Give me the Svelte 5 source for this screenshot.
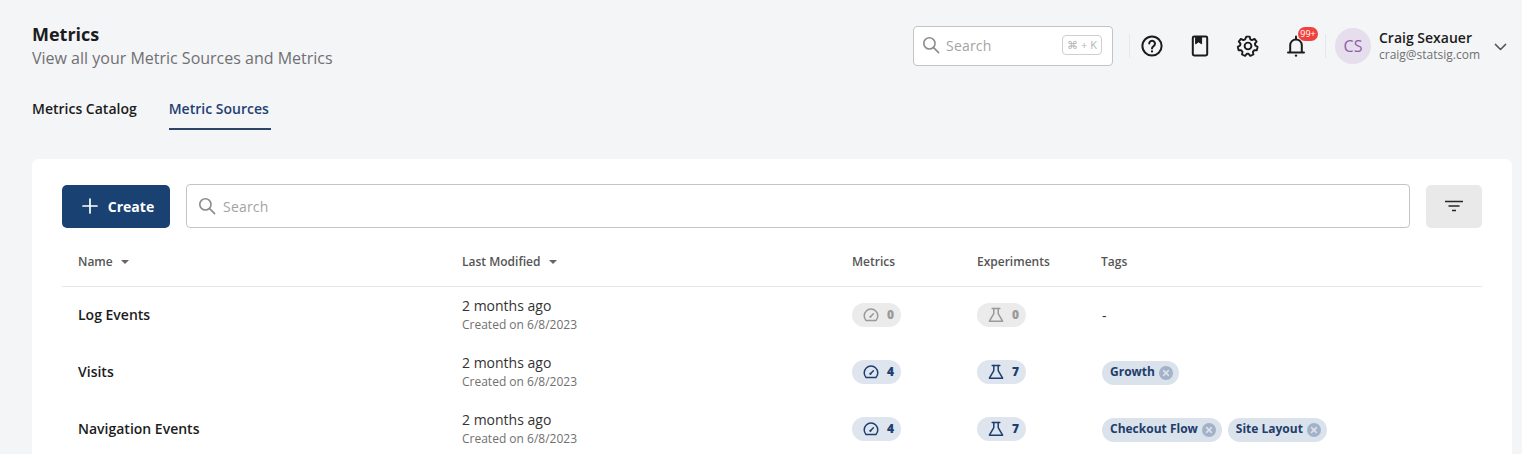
<script>
	const rows = [
		{ name: 'Log Events', metrics: 0, experiments: 0, tags: [] },
		{ name: 'Visits', metrics: 4, experiments: 7, tags: ['Growth'] },
		{ name: 'Navigation Events', metrics: 4, experiments: 7, tags: ['Checkout Flow', 'Site Layout'] }
	];
</script>

{#snippet gauge()}
	<svg class="pill-icon" viewBox="0 0 16 16" fill="none" stroke="currentColor" stroke-width="1.5" stroke-linecap="round" stroke-linejoin="round">
		<path d="M3 13.4h10a6.8 6.8 0 1 0-10 0z" />
		<path d="M7.4 9.8l3-3" />
		<circle cx="7.4" cy="9.8" r="1.1" fill="currentColor" stroke="none" />
	</svg>
{/snippet}

{#snippet flask()}
	<svg class="pill-icon" viewBox="0 0 16 16" fill="none" stroke="currentColor" stroke-width="1.5" stroke-linecap="round" stroke-linejoin="round">
		<path d="M4.2 1.6h7.6" />
		<path d="M5.8 1.6v5L1.4 14.2h13.2L10.2 6.6v-5" />
	</svg>
{/snippet}

{#snippet magnifier()}
	<svg class="search-icon" viewBox="0 0 18 18" fill="none" stroke="currentColor" stroke-width="1.6" stroke-linecap="round">
		<circle cx="7.4" cy="7.4" r="5.6" />
		<path d="M11.6 11.6l5 5" />
	</svg>
{/snippet}

<div class="page">
	<header class="top">
		<div class="titles">
			<h1>Metrics</h1>
			<p>View all your Metric Sources and Metrics</p>
		</div>
		<div class="actions">
			<div class="global-search">
				{@render magnifier()}
				<span class="placeholder">Search</span>
				<span class="kbd">⌘ + K</span>
			</div>
			<span class="divider first"></span>
			<div class="icons">
				<button class="icon-btn" aria-label="Help">
					<svg viewBox="0 0 24 24" fill="none" stroke="currentColor" stroke-width="2" stroke-linecap="round">
						<circle cx="12" cy="12" r="9.6" />
						<path d="M9.2 9.6a2.9 2.9 0 1 1 4.4 2.5c-1 .6-1.6 1.2-1.6 2.3" />
						<circle cx="12" cy="17.4" r="1.1" fill="currentColor" stroke="none" />
					</svg>
				</button>
				<button class="icon-btn" aria-label="Docs">
					<svg viewBox="0 0 24 24" fill="none" stroke="currentColor" stroke-width="2" stroke-linejoin="round">
						<rect x="4.8" y="2.6" width="14.4" height="18.8" rx="1.4" />
						<path d="M7.6 2.6v7.2l3-1.9 3 1.9V2.6z" fill="currentColor" stroke-width="1" />
					</svg>
				</button>
				<button class="icon-btn" aria-label="Settings">
					<svg viewBox="0 0 24 24" fill="none" stroke="currentColor" stroke-width="1.9" stroke-linejoin="round">
						<path d="M10.3 2.6h3.4l.6 2.7 1.7.8 2.5-1.2 2.1 2.7-1.7 2.1.4 1.8 2.3 1.4-.8 3.3-2.7.1-1.2 1.5.5 2.7-3.1 1.4-1.7-2.1h-1.8l-1.7 2.1-3.1-1.4.5-2.7-1.2-1.5-2.7-.1-.8-3.3 2.3-1.4.4-1.8-1.7-2.1 2.1-2.7 2.5 1.2 1.7-.8z" />
						<circle cx="12" cy="12" r="3.4" />
					</svg>
				</button>
				<button class="icon-btn bell" aria-label="Notifications">
					<svg viewBox="0 0 24 24" fill="none" stroke="currentColor" stroke-width="2" stroke-linecap="round" stroke-linejoin="round">
						<path d="M4 18.4h16M6.2 18.4v-7.2a5.8 5.8 0 0 1 11.6 0v7.2" />
						<path d="M12 2.6v2.4" />
						<circle cx="12" cy="21.6" r="1.2" fill="currentColor" stroke="none" />
					</svg>
					<span class="badge">99+</span>
				</button>
			</div>
			<span class="divider second"></span>
			<div class="user">
				<span class="avatar">CS</span>
				<div class="who">
					<span class="user-name">Craig Sexauer</span>
					<span class="user-mail">craig@statsig.com</span>
				</div>
				<svg class="chev" viewBox="0 0 14 8" fill="none" stroke="currentColor" stroke-width="1.6" stroke-linecap="round" stroke-linejoin="round">
					<path d="M1.5 1.2L7 6.6l5.5-5.4" />
				</svg>
			</div>
		</div>
	</header>

	<nav class="tabs">
		<span class="tab">Metrics Catalog</span>
		<span class="tab active">Metric Sources</span>
	</nav>

	<section class="card">
		<div class="toolbar">
			<button class="create">
				<svg viewBox="0 0 16 16" fill="none" stroke="currentColor" stroke-width="1.7" stroke-linecap="round">
					<path d="M8 1v14M1 8h14" />
				</svg>
				Create
			</button>
			<div class="search">
				{@render magnifier()}
				<span class="placeholder">Search</span>
			</div>
			<button class="filter" aria-label="Filter">
				<svg viewBox="0 0 18 12" fill="none" stroke="currentColor" stroke-width="1.7">
					<path d="M0 1.5h18M3.5 6h11M7 10.5h4" />
				</svg>
			</button>
		</div>

		<div class="row head">
			<span>Name <i class="caret"></i></span>
			<span>Last Modified <i class="caret"></i></span>
			<span>Metrics</span>
			<span>Experiments</span>
			<span>Tags</span>
		</div>

		{#each rows as row}
			<div class="row body">
				<span class="name">{row.name}</span>
				<div class="modified">
					<span class="ago">2 months ago</span>
					<span class="created">Created on 6/8/2023</span>
				</div>
				<div>
					<span class="pill" class:empty={row.metrics === 0}>{@render gauge()}<b>{row.metrics}</b></span>
				</div>
				<div>
					<span class="pill" class:empty={row.experiments === 0}>{@render flask()}<b>{row.experiments}</b></span>
				</div>
				<div class="tags">
					{#each row.tags as tag}
						<span class="tag">
							<span class="tag-label">{tag}</span>
							<svg class="tag-x" viewBox="0 0 14 14">
								<circle cx="7" cy="7" r="7" fill="#a3b2c8" />
								<path d="M4.6 4.6l4.8 4.8M9.4 4.6l-4.8 4.8" stroke="#dbe2eb" stroke-width="1.5" stroke-linecap="round" />
							</svg>
						</span>
					{:else}
						<span class="dash">-</span>
					{/each}
				</div>
			</div>
		{/each}
	</section>
</div>

<style>
	:global(body) {
		margin: 0;
		background: #f4f5f7;
		overflow: hidden;
	}

	.page {
		height: 454px;
		overflow: hidden;
		font-family: 'Open Sans', 'Noto Sans', sans-serif;
		color: #1c1c1c;
		padding: 0 10px 0 32px;
		box-sizing: border-box;
	}

	button {
		font: inherit;
		border: none;
		cursor: pointer;
		padding: 0;
	}

	.top {
		display: flex;
		justify-content: space-between;
		align-items: flex-start;
		height: 100px;
	}

	.titles {
		padding-top: 23px;
	}

	h1 {
		margin: 0;
		font-size: 18px;
		line-height: 23px;
		font-weight: 700;
	}

	.titles p {
		margin: 0;
		font-size: 16px;
		line-height: 24px;
		color: #6f7072;
	}

	.actions {
		display: flex;
		align-items: center;
		padding-top: 26px;
		padding-right: 5px;
	}

	.global-search {
		width: 200px;
		height: 40px;
		box-sizing: border-box;
		border: 1px solid #c4c4c4;
		border-radius: 4px;
		background: #fff;
		display: flex;
		align-items: center;
		padding: 0 10px 2px 8px;
	}

	.search-icon {
		width: 18px;
		height: 18px;
		color: #8c8c8c;
		flex: none;
	}

	.placeholder {
		font-size: 14px;
		color: #a3a3a3;
		margin-left: 6px;
		letter-spacing: 0.2px;
	}

	.kbd {
		margin-left: auto;
		font-size: 11px;
		line-height: 18px;
		color: #b3b3b3;
		border: 1px solid #cfcfcf;
		border-radius: 4px;
		padding: 0 4px;
		white-space: nowrap;
	}

	.divider {
		width: 1px;
		height: 24px;
		background: #e6e7e9;
	}

	.divider.first {
		margin: 0 10px 0 16px;
	}

	.divider.second {
		margin: 0 9px 0 17px;
	}

	.icons {
		display: flex;
		gap: 24px;
	}

	.icon-btn {
		position: relative;
		width: 24px;
		height: 24px;
		background: none;
		color: #1c1c1c;
		display: block;
	}

	.icon-btn svg {
		display: block;
		width: 24px;
		height: 24px;
	}

	.badge {
		position: absolute;
		top: -7px;
		left: 14px;
		min-width: 20px;
		height: 14px;
		border-radius: 7px;
		background: #f0413d;
		color: #fff;
		font-size: 9px;
		line-height: 14px;
		text-align: center;
	}

	.user {
		display: flex;
		align-items: center;
	}

	.avatar {
		width: 36px;
		height: 36px;
		border-radius: 50%;
		background: #e6deec;
		color: #8e5fa8;
		font-size: 16px;
		line-height: 36px;
		text-align: center;
		margin-right: 8px;
	}

	.who {
		display: flex;
		flex-direction: column;
		width: 115px;
	}

	.user-name {
		font-size: 14px;
		line-height: 18px;
		font-weight: 600;
	}

	.user-mail {
		font-size: 12px;
		line-height: 16px;
		color: #6f7072;
	}

	.chev {
		width: 13px;
		height: 8px;
		color: #555;
		margin-top: 1px;
	}

	.tabs {
		display: flex;
		gap: 32px;
		height: 59px;
		align-items: flex-start;
	}

	.tab {
		font-size: 14px;
		line-height: 17px;
		font-weight: 600;
		padding-bottom: 11px;
		border-bottom: 2px solid transparent;
	}

	.tab.active {
		color: #1f4173;
		border-bottom-color: #2d4468;
		padding-right: 2px;
	}

	.card {
		background: #fff;
		border-radius: 6px 6px 0 0;
		padding: 25px 30px 0;
		height: 295px;
		box-sizing: border-box;
	}

	.toolbar {
		display: flex;
		align-items: center;
		gap: 16px;
	}

	.create {
		width: 108px;
		height: 43px;
		background: #194172;
		color: #fff;
		border-radius: 5px;
		font-size: 14px;
		font-weight: 700;
		display: flex;
		align-items: center;
		justify-content: center;
		gap: 10px;
		flex: none;
		padding-left: 4px;
	}

	.create svg {
		width: 16px;
		height: 16px;
	}

	.search {
		flex: 1;
		height: 44px;
		box-sizing: border-box;
		border: 1px solid #c4c4c4;
		border-radius: 4px;
		display: flex;
		align-items: center;
		padding: 0 11px;
	}

	.search .placeholder {
		margin-left: 7px;
	}

	.filter {
		width: 56px;
		height: 43px;
		background: #e9e9e9;
		border-radius: 5px;
		display: flex;
		align-items: center;
		justify-content: center;
		color: #262626;
		flex: none;
	}

	.filter svg {
		width: 18px;
		height: 12px;
	}

	.row {
		display: grid;
		grid-template-columns: 384px 390px 125px 124px 1fr;
		padding-left: 16px;
		align-items: center;
	}

	.head {
		height: 58px;
		margin-top: 1px;
		border-bottom: 1px solid #e6e6e6;
		font-size: 12px;
		font-weight: 600;
		color: #555;
		box-sizing: border-box;
		padding-top: 8px;
	}

	.caret {
		display: inline-block;
		width: 0;
		height: 0;
		margin-left: 5px;
		vertical-align: 2px;
		border-left: 4px solid transparent;
		border-right: 4px solid transparent;
		border-top: 4px solid #666;
	}

	.body {
		height: 57px;
	}

	.name {
		font-size: 14px;
		font-weight: 600;
		margin-top: -2px;
	}

	.modified {
		display: flex;
		flex-direction: column;
		margin-top: -1px;
	}

	.ago {
		font-size: 14px;
		line-height: 17px;
		color: #333;
	}

	.created {
		font-size: 12px;
		line-height: 18px;
		margin-top: 2px;
		color: #707070;
	}

	.pill {
		display: inline-flex;
		align-items: center;
		gap: 8px;
		width: 49px;
		height: 24px;
		box-sizing: border-box;
		padding-left: 11px;
		border-radius: 12px;
		background: #dfe5ee;
		color: #1d3f70;
		font-size: 12px;
		font-weight: 700;
	}

	.pill b {
		margin-top: -2px;
	}

	.pill.empty {
		background: #ebebeb;
		color: #999;
	}

	.pill-icon {
		width: 16px;
		height: 16px;
		flex: none;
	}

	.tags {
		display: flex;
		gap: 6px;
		padding-left: 1px;
	}

	.tag {
		display: inline-flex;
		align-items: center;
		gap: 4px;
		height: 24px;
		padding: 0 6px 0 8px;
		border-radius: 12px;
		background: #dae2ec;
		color: #1f3d6b;
		font-size: 12px;
		font-weight: 700;
	}

	.tag-label {
		margin-top: -2px;
	}

	.tag-x {
		width: 14px;
		height: 14px;
	}

	.dash {
		font-size: 14px;
		color: #333;
	}
</style>
